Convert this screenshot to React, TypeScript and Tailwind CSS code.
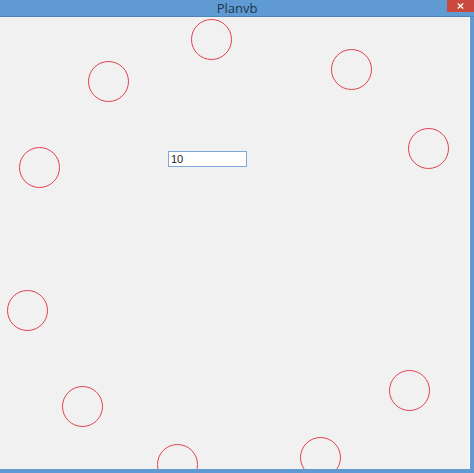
const circles = [
  { x: 191, y: 19 },
  { x: 88, y: 61 },
  { x: 331, y: 49 },
  { x: 408, y: 128 },
  { x: 19, y: 147 },
  { x: 7, y: 290 },
  { x: 62, y: 386 },
  { x: 389, y: 370 },
  { x: 157, y: 444 },
  { x: 300, y: 437 },
];

export default function App() {
  return (
    <div className="flex h-[473px] w-[474px] flex-col overflow-hidden bg-[#5f9bd2] font-['Open_Sans','Liberation_Sans',sans-serif]">
      {/* title bar */}
      <div className="relative flex h-[16px] shrink-0 items-center justify-center">
        <span className="text-[13px] leading-none text-[#1d3550]">Planvb</span>
        <div className="absolute right-0 top-0 flex h-[12px] w-[27px] items-center justify-center bg-[#c9493f]">
          {/* close glyph */}
          <svg width="7" height="6" viewBox="0 0 7 6" className="-mt-[1px]">
            <path d="M0.8 0.5 L6.2 5.5 M6.2 0.5 L0.8 5.5" stroke="#fff" strokeWidth="1.3" />
          </svg>
        </div>
      </div>

      {/* client area */}
      <div className="flex flex-1 border-t border-[#4a86bd]">
        <div className="relative h-[452px] w-[470px] overflow-hidden border-r border-white bg-[#f1f1f1]">
          {circles.map((c, i) => (
            <div
              key={i}
              className="absolute h-[41px] w-[41px] rounded-full border border-[#e2404e]"
              style={{ left: c.x, top: c.y - 17 }}
            />
          ))}
          <input
            defaultValue="10"
            className="absolute left-[168px] top-[134px] h-[16px] w-[79px] border border-[#7fa8d9] bg-white px-[2px] font-['Liberation_Sans',sans-serif] text-[11px] leading-none text-[#222] outline-none"
          />
        </div>
      </div>
    </div>
  );
}
